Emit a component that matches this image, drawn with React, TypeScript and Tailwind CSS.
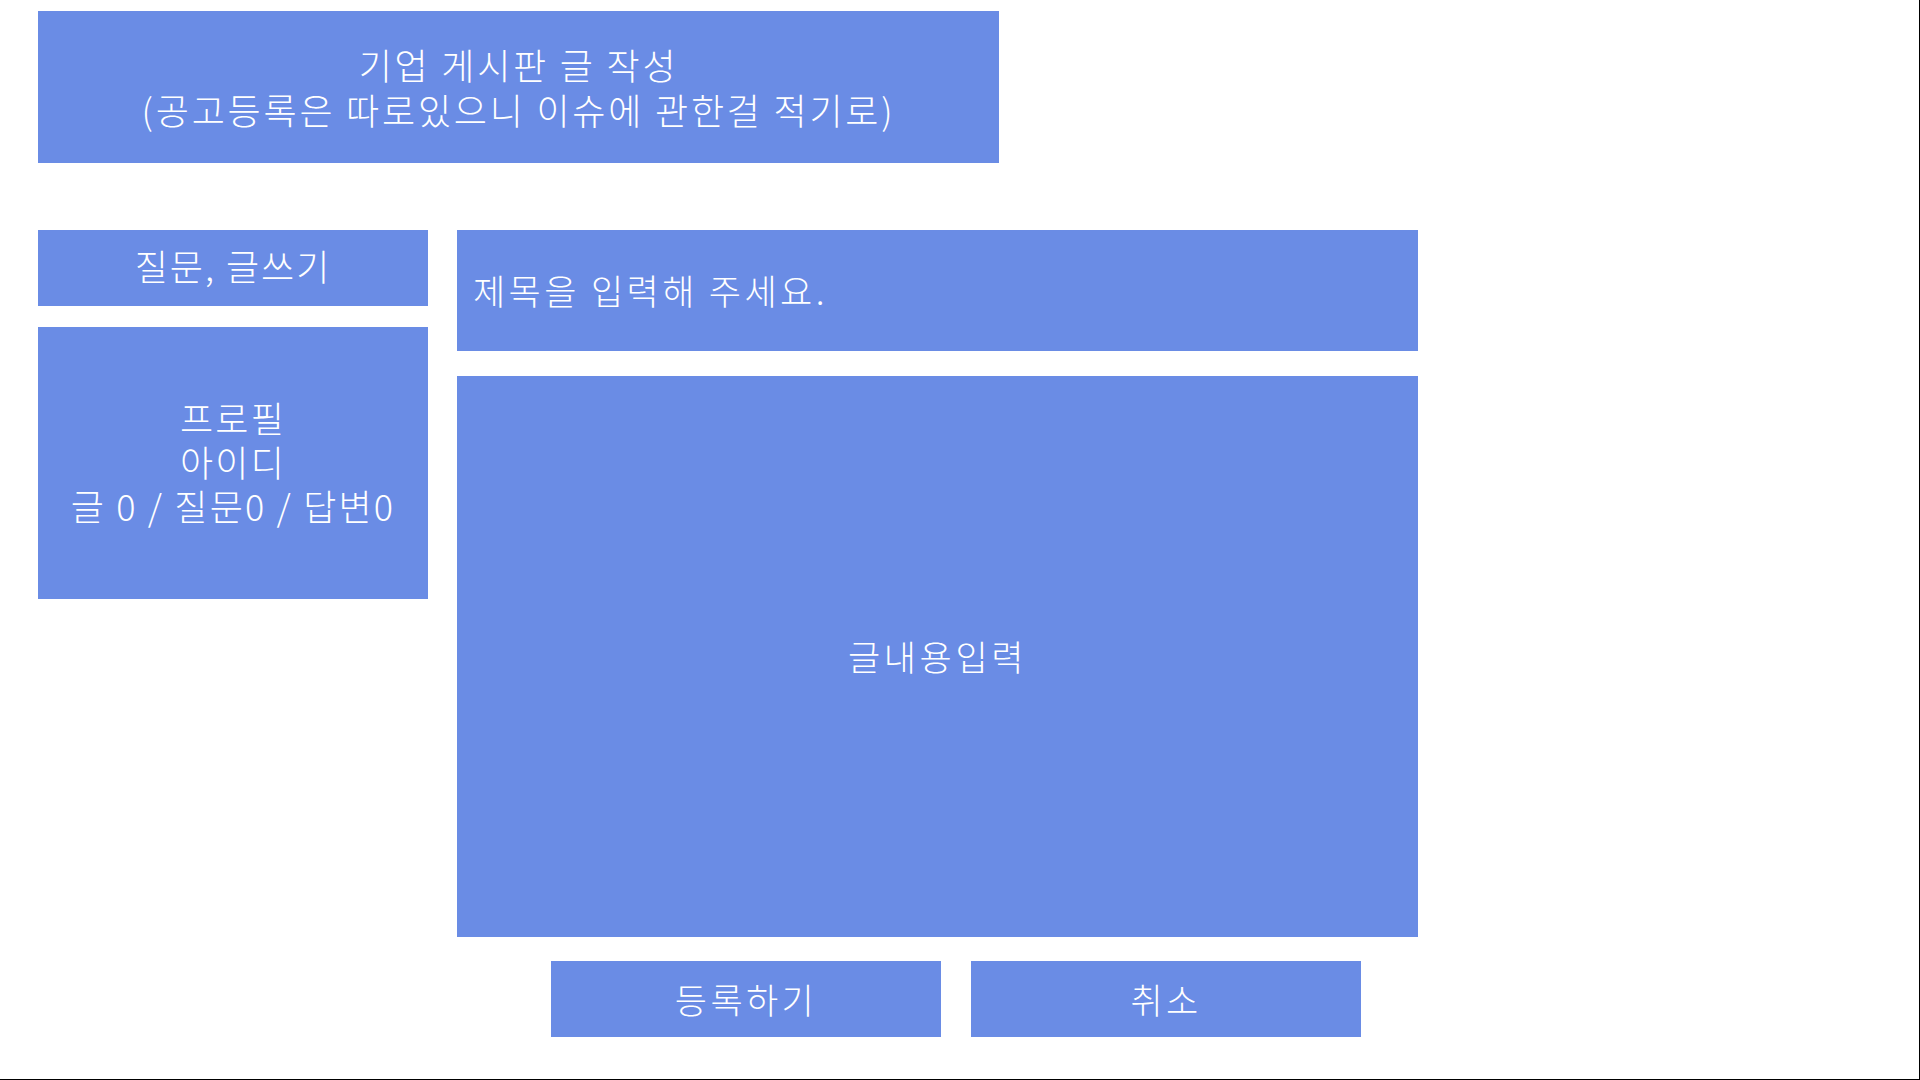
import React from "react";

const box = "bg-[#6a8ce5] text-white flex items-center justify-center text-center";

export default function App() {
  return (
    <div
      className="w-[1920px] h-[1080px] bg-white border-r border-b border-black box-border pl-[38px] pt-[11px] overflow-hidden"
      style={{ fontFamily: '"Noto Sans CJK KR", "Noto Sans", sans-serif' }}
    >
      <div className={`${box} w-[961px] h-[152px] flex-col text-[36px] leading-[45px] tracking-[2.8px] font-light`}>
        <div>기업 게시판 글 작성</div>
        <div>(공고등록은 따로있으니 이슈에 관한걸 적기로)</div>
      </div>

      <div className="flex gap-[29px] mt-[67px]">
        <div className="flex flex-col gap-[21px] w-[390px]">
          <div className={`${box} h-[76px] text-[36px] pb-[6px] tracking-[2px] font-light`}>질문, 글쓰기</div>
          <div className={`${box} h-[272px] flex-col text-[36px] leading-[44px] pb-[4px] tracking-[2.2px] font-light`}>
            <div>프로필</div>
            <div>아이디</div>
            <div>글 0 / 질문0 / 답변0</div>
          </div>
        </div>

        <div className="flex flex-col w-[961px]">
          <div className="bg-[#6a8ce5] text-white h-[121px] flex items-center pl-[16px] text-[35px] tracking-[3.4px] font-light">
            제목을 입력해 주세요.
          </div>
          <div className={`${box} h-[561px] mt-[25px] text-[35px] tracking-[3.6px] font-light`}>글내용입력</div>
          <div className="flex gap-[30px] pl-[94px] mt-[24px]">
            <div className={`${box} w-[390px] h-[76px] text-[35px] tracking-[3.4px] font-light`}>등록하기</div>
            <div className={`${box} w-[390px] h-[76px] text-[35px] tracking-[3.4px] font-light`}>취소</div>
          </div>
        </div>
      </div>
    </div>
  );
}
